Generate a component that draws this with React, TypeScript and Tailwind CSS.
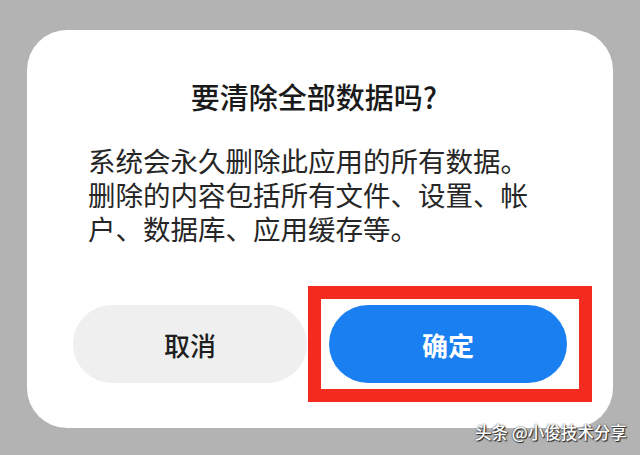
import React from 'react';

const CJK = { fontFamily: '"Noto Sans CJK SC", "Noto Sans", sans-serif' };

export default function App() {
  return (
    <div className="relative w-[640px] h-[455px] bg-[#b3b3b3] overflow-hidden pt-[30px] pl-[27px]" style={CJK}>
      {/* Dialog card */}
      <div className="w-[586px] h-[398px] bg-white rounded-[40px] flex flex-col">
        <h1 className="pt-[46px] pr-[12px] text-center text-[29px] leading-[40px] font-medium text-[#1a1a1a]">
          要清除全部数据吗?
        </h1>

        <p className="mt-[27px] ml-[61px] w-[452px] text-[27.5px] leading-[34px] text-[#262626]">
          系统会永久删除此应用的所有数据。删除的内容包括所有文件、设置、帐户、数据库、应用缓存等。
        </p>

        {/* Actions */}
        <div className="mt-auto mb-[45px] px-[46px] flex gap-[22px]">
          <button className="w-[234px] h-[78px] rounded-full bg-[#efefef] text-[26px] font-medium text-[#1f1f1f]">
            取消
          </button>
          <div className="relative">
            <button className="w-[238px] h-[78px] rounded-full bg-[#1a80f2] text-[26px] font-bold text-white">
              确定
            </button>
            {/* highlight annotation */}
            <div className="absolute -left-[21px] -right-[25px] -top-[19px] -bottom-[19px] border-[13px] border-[#f52a1f] pointer-events-none" />
          </div>
        </div>
      </div>

      {/* Watermark */}
      <div className="absolute left-[475px] top-[421px] text-[16.5px] leading-[22px] font-medium text-white whitespace-nowrap [text-shadow:0_0_2px_#333,1px_1px_1px_#222]">
        头条 @小俊技术分享
      </div>
    </div>
  );
}
